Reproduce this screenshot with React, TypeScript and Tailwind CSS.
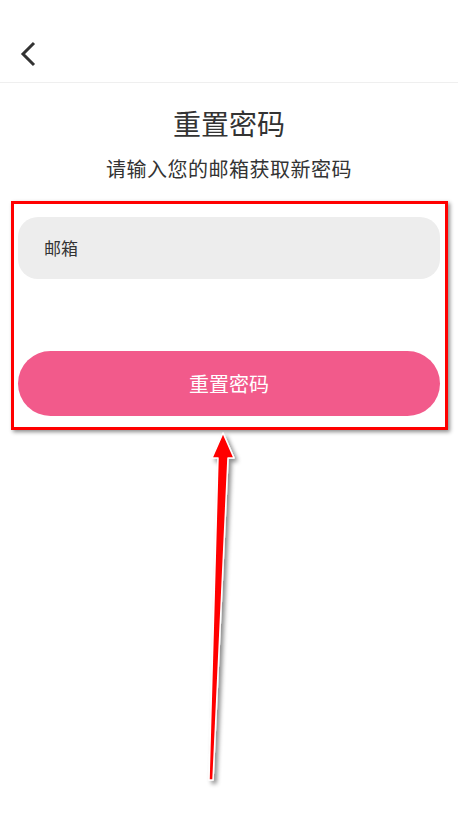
import React from "react";

export default function App() {
  return (
    <div
      className="relative w-[458px] h-[820px] bg-white overflow-hidden"
      style={{ fontFamily: '"Noto Sans CJK SC", "Noto Sans", sans-serif' }}
    >
      {/* Header */}
      <div className="h-[83px] border-b border-[#efefef] flex items-end pb-[14px] pl-[19px]">
        <svg width="18" height="28" viewBox="0 0 18 28" fill="none">
          <path d="M15 3 L4 14 L15 25" stroke="#333" strokeWidth="3" strokeLinecap="butt" />
        </svg>
      </div>

      <div className="flex flex-col items-center">
        <div className="mt-[20px] text-[28px] leading-[40px] text-[#333]">重置密码</div>
        <div className="mt-[13px] text-[20px] leading-[26px] text-[#333] tracking-[0.5px]">请输入您的邮箱获取新密码</div>
      </div>

      <div className="mt-[35px] px-[18px] flex flex-col">
        <div className="h-[62px] rounded-[20px] bg-[#ededed] flex items-center pl-[26px] text-[17px] text-[#333]">
          邮箱
        </div>
        <button className="mt-[72px] h-[65px] rounded-full bg-[#f25a8b] text-white text-[20px] flex items-center justify-center">
          重置密码
        </button>
      </div>

      {/* Annotation box */}
      <div className="absolute left-[11px] top-[201px] w-[437px] h-[229px] border-[3px] border-[#ff0000] shadow-[2px_2px_4px_rgba(0,0,0,0.45)]" />

      {/* Annotation arrow */}
      <svg className="absolute left-0 top-0" width="458" height="820" viewBox="0 0 458 820">
        <defs>
          <filter id="sh" x="-50%" y="-10%" width="200%" height="120%">
            <feDropShadow dx="3" dy="3" stdDeviation="2" floodColor="#000" floodOpacity="0.45" />
          </filter>
        </defs>
        <polygon
          points="223,433 234,458 228,458 213,780 209,780 218,458 212,458"
          fill="#ff0000"
          stroke="#ffffff"
          strokeWidth="1.5"
          strokeLinejoin="round"
          filter="url(#sh)"
        />
      </svg>
    </div>
  );
}
